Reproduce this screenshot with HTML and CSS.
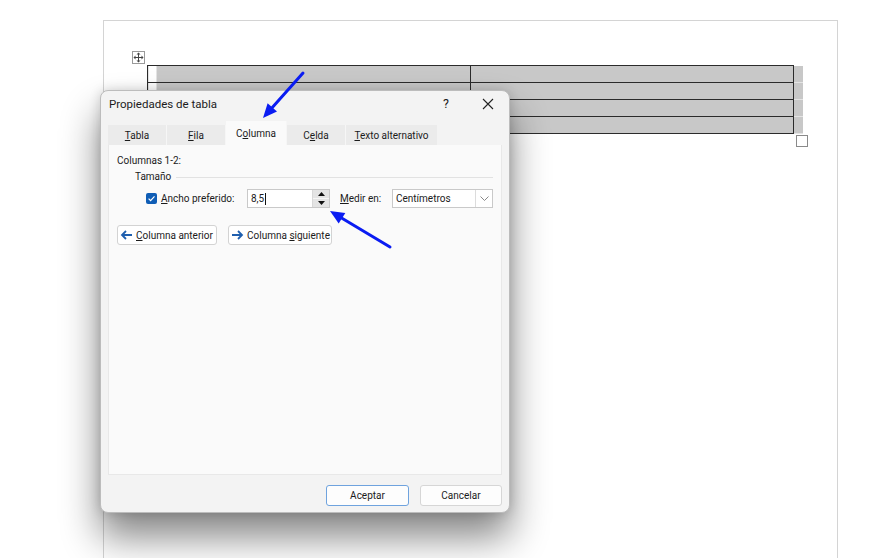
FILE: index.html
```html
<!DOCTYPE html>
<html lang="es">
<head>
<meta charset="utf-8">
<title>Propiedades de tabla</title>
<link rel="stylesheet" href="styles.css">
</head>
<body>
<div class="doc">
  <div class="move-handle">
    <svg width="11" height="11" viewBox="0 0 11 11">
      <path d="M5.5 1v9M1 5.5h9" stroke="#444" stroke-width="1" fill="none"/>
      <path d="M5.5 0.5l-2 2h4zM5.5 10.5l-2-2h4zM0.5 5.5l2-2v4zM10.5 5.5l-2-2v4z" fill="#444"/>
    </svg>
  </div>
  <table class="wtable">
    <colgroup><col class="w1"><col class="w2"><col class="w3"></colgroup>
    <tr><td class="c1"></td><td class="c2"></td><td class="end"></td></tr>
    <tr><td class="c1"></td><td class="c2"></td><td class="end"></td></tr>
    <tr><td class="c1"></td><td class="c2"></td><td class="end"></td></tr>
    <tr><td class="c1"></td><td class="c2"></td><td class="end"></td></tr>
  </table>
  <div class="resize-handle"></div>
</div>

<div class="dialog">
  <div class="titlebar">
    <span class="title">Propiedades de tabla</span>
    <span class="help">?</span>
    <span class="close">
      <svg width="12" height="12" viewBox="0 0 12 12"><path d="M1 1L11 11M11 1L1 11" stroke="#222" stroke-width="1.1" fill="none"/></svg>
    </span>
  </div>
  <div class="tabs">
    <div class="tab t1"><u>T</u>abla</div>
    <div class="tab t2"><u>F</u>ila</div>
    <div class="tab active t3">C<u>o</u>lumna</div>
    <div class="tab t4">C<u>e</u>lda</div>
    <div class="tab t5"><u>T</u>exto alternativo</div>
  </div>
  <div class="panel">
    <div class="cols-label">Columnas 1-2:</div>
    <div class="group-head"><span>Tamaño</span><span class="rule"></span></div>
    <div class="size-row">
      <span class="checkbox">
        <svg width="11" height="11" viewBox="0 0 11 11"><rect x="0" y="0" width="11" height="11" rx="2" fill="#0f5db5"/><path d="M2.6 5.6l2 2 3.9-4.3" stroke="#fff" stroke-width="1.2" fill="none"/></svg>
      </span>
      <span class="lbl lbl-ancho"><u>A</u>ncho preferido:</span>
      <span class="input">
        <span class="val">8,5</span><span class="caret"></span>
        <span class="spin">
          <span class="spin-up"><svg width="7" height="4" viewBox="0 0 7 4"><path d="M3.5 0L7 4H0z" fill="#111"/></svg></span>
          <span class="spin-down"><svg width="7" height="4" viewBox="0 0 7 4"><path d="M0 0H7L3.5 4z" fill="#111"/></svg></span>
        </span>
      </span>
      <span class="lbl lbl-medir"><u>M</u>edir en:</span>
      <span class="select">
        <span class="sel-val">Centímetros</span>
        <span class="chev"><svg width="9" height="5" viewBox="0 0 9 5"><path d="M0.5 0.5L4.5 4.5 8.5 0.5" stroke="#888" stroke-width="1" fill="none"/></svg></span>
      </span>
    </div>
    <div class="nav-row">
      <button class="navbtn prev">
        <svg class="navicon" width="13" height="10" viewBox="0 0 13 10"><path d="M12 5H2.5M6 1L2 5l4 4" stroke="#1f5fae" stroke-width="1.8" fill="none"/></svg>
        <span><u>C</u>olumna anterior</span>
      </button>
      <button class="navbtn next">
        <svg class="navicon" width="13" height="10" viewBox="0 0 13 10"><path d="M1 5h9.5M7 1l4 4-4 4" stroke="#1f5fae" stroke-width="1.8" fill="none"/></svg>
        <span>Columna <u>s</u>iguiente</span>
      </button>
    </div>
  </div>
  <div class="footer">
    <button class="btn primary">Aceptar</button>
    <button class="btn cancel">Cancelar</button>
  </div>
</div>

<svg class="annot" width="886" height="558" viewBox="0 0 886 558">
  <path d="M303 73L272.3 107.5" stroke="#0a1cf2" stroke-width="3" stroke-linecap="round" fill="none"/>
  <path d="M263 118L277 111.6 267.6 103.3z" fill="#0a1cf2"/>
  <path d="M390 247L342 218.2" stroke="#0a1cf2" stroke-width="3" stroke-linecap="round" fill="none"/>
  <path d="M330 211L345.3 212.9 338.7 223.5z" fill="#0a1cf2"/>
</svg>
</body>
</html>
```

FILE: styles.css
```css
html, body {
  margin: 0;
  padding: 0;
}
body {
  width: 886px;
  height: 558px;
  overflow: hidden;
  background: #ffffff;
  position: relative;
  font-family: "Roboto", "Noto Sans", sans-serif;
  color: #1b1b1b;
}

/* Document page */
.doc {
  position: relative;
  box-sizing: border-box;
  margin: 20px 0 0 103px;
  width: 735px;
  height: 540px;
  border: 1px solid #d4d4d4;
  border-bottom: none;
  padding: 44px 0 0 43px;
}
.move-handle {
  position: absolute;
  left: 28px;
  top: 30px;
  width: 13px;
  height: 13px;
  box-sizing: border-box;
  border: 1px solid #9a9a9a;
  background: #fff;
  display: flex;
  align-items: center;
  justify-content: center;
}
.resize-handle {
  position: absolute;
  left: 692px;
  top: 114px;
  width: 12px;
  height: 12px;
  box-sizing: border-box;
  border: 1px solid #8a8a8a;
  background: #fff;
}
.wtable {
  border-collapse: collapse;
  table-layout: fixed;
  width: 655px;
}
.wtable col.w1 { width: 323px; }
.wtable col.w2 { width: 323px; }
.wtable col.w3 { width: 9px; }
.wtable td {
  height: 16px;
  padding: 0;
}
.wtable td.c1,
.wtable td.c2 {
  border: 1px solid #2b2b2b;
  background: #c8c8c8;
}
.wtable td.c1 {
  background: linear-gradient(to right, #ffffff 8px, #c8c8c8 8px);
}
.wtable td.end {
  background: #c8c8c8;
  border-bottom: 1px solid #e4e4e4;
}

/* Dialog window */
.dialog {
  position: absolute;
  left: 100px;
  top: 90px;
  width: 410px;
  height: 423px;
  box-sizing: border-box;
  border: 1px solid #bcbcbc;
  border-radius: 8px;
  background: #f3f3f3;
  padding: 0 7px;
  display: flex;
  flex-direction: column;
  box-shadow: 0 24px 38px rgba(0, 0, 0, 0.48), 0 0 12px rgba(0, 0, 0, 0.16);
  white-space: nowrap;
}
.titlebar {
  height: 30px;
  display: flex;
  align-items: flex-start;
  padding-top: 5px;
  box-sizing: border-box;
  font-size: 11.5px;
  line-height: 16px;
}
.title {
  margin-left: 1px;
}
.help {
  margin-left: auto;
  width: 16px;
  text-align: center;
  margin-right: 24px;
  font-size: 12.5px;
}
.close {
  width: 20px;
  height: 16px;
  display: flex;
  align-items: center;
  justify-content: center;
  margin-right: 4px;
}

.tabs {
  height: 24px;
  display: flex;
  align-items: flex-end;
  font-size: 10px;
}
.tab {
  box-sizing: border-box;
  height: 20px;
  line-height: 22px;
  text-align: center;
  background: #ebebeb;
  border-right: 1px solid #f6f6f6;
  overflow: hidden;
}
.tab.active {
  height: 24px;
  padding-top: 2px;
  background: #fafafa;
}
.t1 { width: 59px; }
.t2 { width: 59px; }
.t3 { width: 61px; }
.t4 { width: 59px; }
.t5 { width: 91px; border-right: none; }

.panel {
  height: 330px;
  box-sizing: border-box;
  background: #fafafa;
  border: 1px solid #e8e8e8;
  border-top: none;
  font-size: 10px;
  line-height: 14px;
  padding-top: 9px;
}
.cols-label {
  margin-left: 8px;
}
.group-head {
  display: flex;
  align-items: center;
  margin: 2px 8px 0 26px;
}
.group-head .rule {
  flex: 1;
  height: 1px;
  background: #e2e2e2;
  margin-left: 5px;
}
.size-row {
  display: flex;
  align-items: center;
  height: 19px;
  margin-top: 5px;
}
.checkbox {
  width: 11px;
  height: 11px;
  margin-left: 37px;
  display: flex;
}
.lbl-ancho {
  margin-left: 4px;
  width: 86px;
}
.input {
  position: relative;
  width: 83px;
  height: 19px;
  box-sizing: border-box;
  border: 1px solid #c9c9c9;
  background: #fff;
  display: flex;
  align-items: center;
  padding-left: 3px;
}
.caret {
  width: 1px;
  height: 12px;
  background: #111;
  margin-left: 1px;
}
.spin {
  position: absolute;
  right: 0;
  top: 0;
  width: 16px;
  height: 17px;
  display: flex;
  flex-direction: column;
  border-left: 1px solid #d8d8d8;
}
.spin-up,
.spin-down {
  flex: 1;
  background: #e4e4e4;
  display: flex;
  align-items: center;
  justify-content: center;
}
.spin-up {
  border-bottom: 1px solid #f6f6f6;
}
.lbl-medir {
  margin-left: 10px;
  width: 52px;
}
.select {
  width: 101px;
  height: 19px;
  box-sizing: border-box;
  border: 1px solid #c9c9c9;
  background: #fff;
  display: flex;
  align-items: center;
}
.sel-val {
  flex: 1;
  padding-left: 3px;
}
.chev {
  width: 16px;
  height: 17px;
  border-left: 1px solid #dcdcdc;
  display: flex;
  align-items: center;
  justify-content: center;
}

.nav-row {
  display: flex;
  gap: 11px;
  margin: 17px 0 0 8px;
}
.navbtn {
  height: 20px;
  box-sizing: border-box;
  border: 1px solid #d3d3d3;
  border-radius: 3px;
  background: #ffffff;
  font-family: inherit;
  font-size: 10px;
  color: #1b1b1b;
  display: flex;
  align-items: center;
  gap: 3px;
  padding: 0 0 0 2px;
  white-space: nowrap;
}
.navicon {
  flex-shrink: 0;
}
.navbtn.prev { width: 100px; }
.navbtn.next { width: 104px; }

.footer {
  flex: 1;
  display: flex;
  justify-content: flex-end;
  align-items: flex-start;
  padding-top: 10px;
  gap: 11px;
}
.btn {
  height: 21px;
  box-sizing: border-box;
  border: 1px solid #d6d6d6;
  border-radius: 3px;
  background: #fdfdfd;
  font-family: inherit;
  font-size: 10px;
  color: #1b1b1b;
  padding: 0;
}
.btn.primary {
  width: 83px;
  border-color: #6fa3de;
}
.btn.cancel {
  width: 82px;
}

.annot {
  position: absolute;
  left: 0;
  top: 0;
  pointer-events: none;
}
```
